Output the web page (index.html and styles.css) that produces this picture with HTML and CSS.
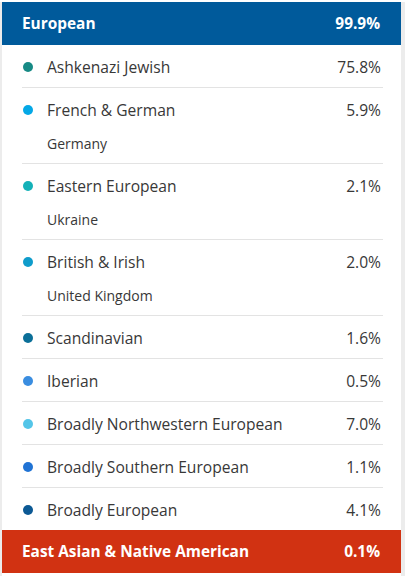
FILE: index.html
```html
<!DOCTYPE html>
<html>
<head>
<meta charset="utf-8">
<link rel="stylesheet" href="styles.css">
</head>
<body>
<div class="card">
  <div class="group group-eu">
    <span class="group-name">European</span>
    <span class="group-pct">99.9%</span>
  </div>
  <ul class="list">
    <li class="row">
      <div class="main"><span class="dot c1"></span><span class="name">Ashkenazi Jewish</span><span class="pct">75.8%</span></div>
    </li>
    <li class="row">
      <div class="main"><span class="dot c2"></span><span class="name">French &amp; German</span><span class="pct">5.9%</span></div>
      <div class="sub">Germany</div>
    </li>
    <li class="row">
      <div class="main"><span class="dot c3"></span><span class="name">Eastern European</span><span class="pct">2.1%</span></div>
      <div class="sub">Ukraine</div>
    </li>
    <li class="row">
      <div class="main"><span class="dot c4"></span><span class="name">British &amp; Irish</span><span class="pct">2.0%</span></div>
      <div class="sub">United Kingdom</div>
    </li>
    <li class="row">
      <div class="main"><span class="dot c5"></span><span class="name">Scandinavian</span><span class="pct">1.6%</span></div>
    </li>
    <li class="row">
      <div class="main"><span class="dot c6"></span><span class="name">Iberian</span><span class="pct">0.5%</span></div>
    </li>
    <li class="row">
      <div class="main"><span class="dot c7"></span><span class="name">Broadly Northwestern European</span><span class="pct">7.0%</span></div>
    </li>
    <li class="row">
      <div class="main"><span class="dot c8"></span><span class="name">Broadly Southern European</span><span class="pct">1.1%</span></div>
    </li>
    <li class="row last">
      <div class="main"><span class="dot c9"></span><span class="name">Broadly European</span><span class="pct">4.1%</span></div>
    </li>
  </ul>
  <div class="group group-ea">
    <span class="group-name">East Asian &amp; Native American</span>
    <span class="group-pct">0.1%</span>
  </div>
</div>
</body>
</html>
```

FILE: styles.css
```css
html, body {
  margin: 0;
  padding: 0;
  background: #ffffff;
}
body {
  font-family: "Open Sans", "Noto Sans", sans-serif;
  color: #383838;
}
.card {
  width: 399px;
  margin-top: 2px;
  border-left: 2px solid #ececec;
  border-right: 4px solid #ececec;
  padding-bottom: 3px;
  background: #fff;
}
.group {
  height: 43px;
  display: flex;
  align-items: center;
  justify-content: space-between;
  padding: 0 21px 0 20px;
  color: #fff;
  font-weight: 700;
  font-size: 15.4px;
}
.group-eu { background: #005a9b; }
.group-ea { background: #d13212; }
.list {
  list-style: none;
  margin: 0;
  padding: 0 18px 0 20px;
}
.row {
  border-bottom: 1px solid #e3e3e3;
}
.row.last { border-bottom: none; }
.main {
  height: 42px;
  padding-top: 1px;
  box-sizing: border-box;
  display: flex;
  align-items: center;
  font-size: 15.6px;
}
.dot {
  width: 10px;
  height: 10px;
  border-radius: 50%;
  margin-left: 1px;
  margin-right: 14px;
  flex: none;
}
.name { flex: 1; }
.pct { text-align: right; margin-right: 2px; }
.sub {
  margin-top: 4px;
  line-height: 20px;
  padding-bottom: 9px;
  padding-left: 25px;
  font-size: 14px;
}
.c1 { background: #178a85; }
.c2 { background: #04a8e6; }
.c3 { background: #14b1b8; }
.c4 { background: #0f9ccb; }
.c5 { background: #0b6f98; }
.c6 { background: #3a8de0; }
.c7 { background: #54c5e8; }
.c8 { background: #2073d4; }
.c9 { background: #0c5994; }
```
